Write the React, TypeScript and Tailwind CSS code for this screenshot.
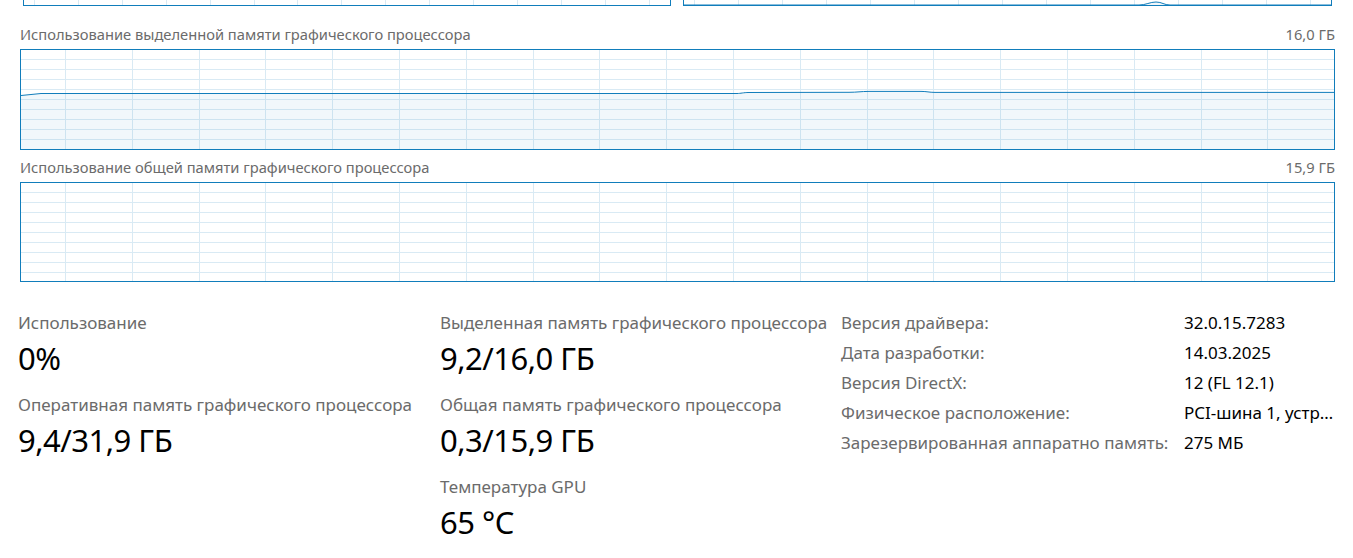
import React from "react";

const BLUE = "#117dbb";
const GRID = "#d9eaf4";

type GridProps = {
  w: number;
  h: number;
  dx: number;
  step: number;
  rows?: number[];
  line?: string;
};

function ChartGrid({ w, h, dx, step, rows = [], line }: GridProps) {
  const cols: number[] = [];
  for (let x = dx; x < w; x += step) cols.push(Math.round(x) + 0.5);
  return (
    <svg width={w} height={h} className="block" shapeRendering="crispEdges">
      {rows.map((y) => (
        <line key={"r" + y} x1={0} x2={w} y1={y + 0.5} y2={y + 0.5} stroke={GRID} strokeWidth={1} />
      ))}
      {cols.map((x) => (
        <line key={"c" + x} x1={x} x2={x} y1={0} y2={h} stroke={GRID} strokeWidth={1} />
      ))}
      {line && (
        <>
          <path d={`${line} L${w},${h} L0,${h} Z`} fill={BLUE} fillOpacity={0.06} stroke="none" />
          <path d={line} fill="none" stroke={BLUE} strokeWidth={1} shapeRendering="geometricPrecision" />
        </>
      )}
    </svg>
  );
}

const rows10 = [9, 19, 29, 39, 49, 59, 69, 79, 89];

const stats = [
  { label: "Версия драйвера:", value: "32.0.15.7283" },
  { label: "Дата разработки:", value: "14.03.2025" },
  { label: "Версия DirectX:", value: "12 (FL 12.1)" },
  { label: "Физическое расположение:", value: "PCI-шина 1, устройство 0, функция 0" },
  { label: "Зарезервированная аппаратно память:", value: "275 МБ" },
];

function Metric({ label, value }: { label: string; value: string }) {
  return (
    <div className="flex flex-col">
      <div className="h-[22px] leading-[22px] text-[17px] text-[#6b6b6b] whitespace-nowrap">{label}</div>
      <div className="h-[48px] leading-[48px] text-[31px] text-black whitespace-nowrap tracking-[-0.5px]">{value}</div>
    </div>
  );
}

export default function App() {
  return (
    <div
      className="w-[1353px] h-[558px] overflow-hidden bg-white pl-[20px] pr-[18px]"
      style={{ fontFamily: '"Noto Sans", "Open Sans", sans-serif' }}
    >
      {/* tail of the charts above */}
      <div className="h-[6px] flex items-end gap-[12px] pl-[3px] pr-[3px] overflow-hidden">
        <div className="w-[648px] h-[100px] shrink-0 border border-[#117dbb]">
          <ChartGrid w={646} h={98} dx={10} step={43.9} />
        </div>
        <div className="w-[649px] h-[100px] shrink-0 border border-[#117dbb]">
          <ChartGrid w={647} h={98} dx={10} step={44} line="M0,98 L455,98 C462,98 466,95 472,95 C478,95 480,98 486,98 L647,98" />
        </div>
      </div>

      {/* dedicated memory */}
      <div className="h-[43px] flex items-end justify-between pb-[5px] text-[14.7px] leading-[20px] text-[#6b6b6b]">
        <span>Использование выделенной памяти графического процессора</span>
        <span>16,0 ГБ</span>
      </div>
      <div className="w-[1315px] h-[101px] border border-[#117dbb]">
        <ChartGrid
          w={1313}
          h={99}
          dx={44}
          step={66.8}
          rows={rows10}
          line="M0,45.5 L20,43.5 L716,43.5 C720,43.5 722,42.5 728,42.5 L828,42.3 C836,42.3 840,41.4 848,41.4 L900,41.4 C906,41.4 908,42.4 914,42.4 L1313,42.4"
        />
      </div>

      {/* shared memory */}
      <div className="mt-[7px] mb-[5px] h-[20px] flex items-center justify-between text-[14.7px] leading-[20px] text-[#6b6b6b]">
        <span>Использование общей памяти графического процессора</span>
        <span>15,9 ГБ</span>
      </div>
      <div className="w-[1315px] h-[100px] border border-[#117dbb]">
        <ChartGrid w={1313} h={98} dx={44} step={66.8} rows={rows10} />
      </div>

      {/* details */}
      <div className="mt-[30px] flex">
        <div className="w-[422px] shrink-0 -ml-[2px] flex flex-col gap-[12px]">
          <Metric label="Использование" value="0%" />
          <Metric label="Оперативная память графического процессора" value="9,4/31,9 ГБ" />
        </div>
        <div className="w-[401px] shrink-0 flex flex-col gap-[12px]">
          <Metric label="Выделенная память графического процессора" value="9,2/16,0 ГБ" />
          <Metric label="Общая память графического процессора" value="0,3/15,9 ГБ" />
          <Metric label="Температура GPU" value="65 °C" />
        </div>
        <div className="flex-1 min-w-0 -mt-[4px] flex flex-col text-[17px]">
          {stats.map((s) => (
            <div key={s.label} className="flex h-[30px] leading-[30px]">
              <div className="w-[343px] shrink-0 text-[#6b6b6b] whitespace-nowrap">{s.label}</div>
              <div className="min-w-0 flex-1 text-black whitespace-nowrap overflow-hidden text-ellipsis">{s.value}</div>
            </div>
          ))}
        </div>
      </div>
    </div>
  );
}
